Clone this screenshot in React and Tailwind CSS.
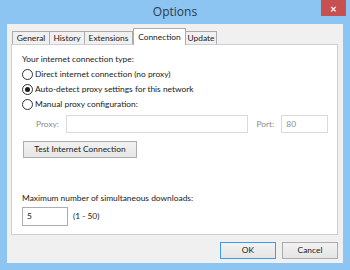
import React, { useState } from 'react';

const tabs = [
  { label: 'General', w: 'w-[38px]' },
  { label: 'History', w: 'w-[35px]' },
  { label: 'Extensions', w: 'w-[48px]' },
  { label: 'Connection', w: 'w-[53px]' },
  { label: 'Update', w: 'w-[31px]' },
];

const Radio = ({ checked, label, onClick }) => (
  <div className="flex items-center h-[15px] cursor-default" onClick={onClick}>
    <span className="w-[11px] h-[11px] rounded-full border border-[#333] bg-white flex items-center justify-center">
      {checked && <span className="w-[5px] h-[5px] rounded-full bg-[#1a1a1a]"></span>}
    </span>
    <span className="ml-[2px]">{label}</span>
  </div>
);

const App = () => {
  const [mode, setMode] = useState('auto');
  const [active] = useState('Connection');

  return (
    <div className="w-[350px] h-[270px] bg-[#8cc4f2] flex flex-col relative font-['Lato',sans-serif] text-[8.4px] text-[#1a1a1a] overflow-hidden">
      {/* title bar */}
      <div className="h-[24px] flex items-center justify-center font-['Open_Sans',sans-serif] text-[12px] text-[#2a3a4c] leading-none">
        Options
      </div>
      <button className="absolute top-0 right-[4px] w-[25px] h-[16px] bg-[#c75050] text-white text-[11px] leading-none flex items-center justify-center font-bold">
        ×
      </button>

      {/* client area */}
      <div className="flex-1 mx-[7px] mb-[7px] bg-[#f0f0f0] pt-[4px] pl-[4px] pr-[5px] flex flex-col">
        {/* tabs */}
        <div className="flex items-end h-[16px] pl-[1px]">
          {tabs.map((t, i) =>
            t.label === active ? (
              <div
                key={t.label}
                className={`${t.w} h-[17px] -mb-[1px] relative z-10 bg-white border border-b-0 border-[#acacac] flex items-center justify-center`}
              >
                {t.label}
              </div>
            ) : (
              <div
                key={t.label}
                className={`${t.w} h-[13px] bg-[#f0f0f0] border-t border-r border-[#acacac] flex items-center justify-center text-[#1a1a1a] ${i === 0 ? 'border-l' : ''}`}
              >
                {t.label}
              </div>
            )
          )}
        </div>

        {/* panel */}
        <div className="h-[191px] bg-white border border-[#cfcfcf] pl-[10px] pr-[9px] pt-[7px]">
          <div className="h-[15px] flex items-center">Your internet connection type:</div>
          <Radio checked={mode === 'direct'} label="Direct internet connection (no proxy)" onClick={() => setMode('direct')} />
          <Radio checked={mode === 'auto'} label="Auto-detect proxy settings for this network" onClick={() => setMode('auto')} />
          <Radio checked={mode === 'manual'} label="Manual proxy configuration:" onClick={() => setMode('manual')} />

          <div className="flex items-center mt-[3px] text-[#8a8a8a]">
            <span className="ml-[14px] w-[30px]">Proxy:</span>
            <div className="w-[184px] h-[18px] border border-[#dadada] bg-white"></div>
            <span className="ml-[8px] w-[25px]">Port:</span>
            <div className="w-[47px] h-[18px] border border-[#dadada] bg-white flex items-center pl-[4px]">80</div>
          </div>

          <button className="mt-[8px] ml-[1px] w-[114px] h-[17px] border border-[#acacac] bg-gradient-to-b from-[#f2f2f2] to-[#e6e6e6] flex items-center justify-center">
            Test Internet Connection
          </button>

          <div className="mt-[33px] h-[15px] flex items-center">Maximum number of simultaneous downloads:</div>
          <div className="flex items-center mt-[1px]">
            <div className="w-[46px] h-[19px] border border-[#abadb3] bg-white flex items-center pl-[4px]">5</div>
            <span className="ml-[5px]">(1 - 50)</span>
          </div>
        </div>

        {/* buttons */}
        <div className="flex justify-end gap-[6px] mt-[7px]">
          <button className="w-[56px] h-[17px] border border-[#3c9af0] bg-gradient-to-b from-[#f2f2f2] to-[#e5e5e5] flex items-center justify-center">
            OK
          </button>
          <button className="w-[56px] h-[17px] border border-[#acacac] bg-gradient-to-b from-[#f2f2f2] to-[#e5e5e5] flex items-center justify-center">
            Cancel
          </button>
        </div>
      </div>
    </div>
  );
};

export default App;
